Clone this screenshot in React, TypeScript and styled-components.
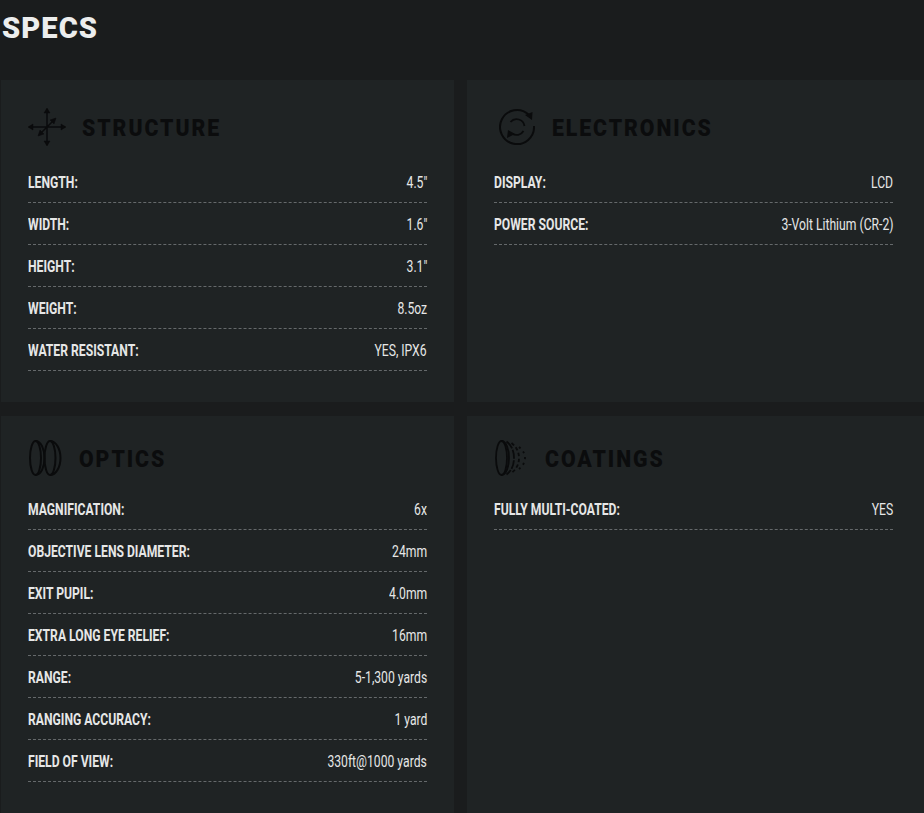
import React from "react";
import styled, { createGlobalStyle } from "styled-components";

const GlobalStyle = createGlobalStyle`
  html, body {
    margin: 0;
    padding: 0;
    background-color: #1a1c1d;
  }
  body {
    font-family: "Roboto", "Liberation Sans", sans-serif;
    overflow: hidden;
  }
`;

const Page = styled.div`
  height: 813px;
  overflow: hidden;
  padding: 0 0 0 1px;
  box-sizing: border-box;
`;

const Title = styled.h1`
  margin: 0;
  height: 80px;
  padding: 10px 0 0 1px;
  box-sizing: border-box;
  font-size: 30px;
  line-height: 36px;
  font-weight: 900;
  letter-spacing: 1.1px;
  color: #eceded;
  transform: scaleX(0.97);
  transform-origin: left center;
`;

const Grid = styled.div`
  display: grid;
  grid-template-columns: 453px 457px;
  grid-template-rows: 322px 420px;
  column-gap: 13px;
  row-gap: 14px;
`;

const Card = styled.section`
  background-color: #1f2324;
  padding: 0 27px;
`;

const CardHeader = styled.div<{ $compact?: boolean; $indent: number; $gap: number }>`
  display: flex;
  align-items: center;
  gap: ${(props) => props.$gap}px;
  padding: ${(props) => (props.$compact ? "23px 0 12px" : "28px 0 16px")};
  padding-left: ${(props) => props.$indent}px;
`;

const CardTitle = styled.h2`
  margin: 2px 0 0 0;
  font-size: 24px;
  line-height: 36px;
  font-weight: 900;
  letter-spacing: 2.2px;
  color: #0b0c0d;
  transform: scaleX(0.885);
  transform-origin: left center;
`;

const SpecList = styled.ul`
  list-style: none;
  margin: 0;
  padding: 0;
  width: 399px;
`;

const SpecRow = styled.li`
  height: 41px;
  margin-bottom: 1px;
  box-sizing: border-box;
  border-bottom: 1px dashed #65696b;
  display: flex;
  justify-content: space-between;
  align-items: center;
  padding-top: 1px;
  font-size: 16px;
  color: #e6e7e7;
`;

const SpecLabel = styled.span`
  font-weight: 700;
  transform: scaleX(0.76);
  transform-origin: left center;
  white-space: nowrap;
`;

const SpecValue = styled.span`
  font-weight: 400;
  transform: scaleX(0.76);
  transform-origin: right center;
  white-space: nowrap;
`;

const Icon = styled.svg`
  display: block;
  flex: none;
  fill: none;
  stroke: #0a0b0c;
`;

const StructureIcon = () => (
  <Icon width="38" height="38" viewBox="0 0 38 38" strokeWidth="1.5">
    <path d="M1 19H37M19 1V37M11 27L27 11" />
    <path d="M0 19l5-3v6zM38 19l-5-3v6zM19 0l-3 5h6zM19 38l-3-5h6zM28 10l-6 2 4 4zM10 28l6-2-4-4z" fill="#0a0b0c" strokeWidth="0.5" />
  </Icon>
);

const ElectronicsIcon = () => (
  <Icon width="36" height="38" viewBox="0 -1 36 38" strokeWidth="2">
    <path d="M29.5 5.500A17 17 0 1 0 35 17" />
    <path d="M11.500 13A8 8 0 0 1 25.500 17M24.500 22A8 8 0 0 1 13 24.500" strokeWidth="1.800" />
    <path d="M33.500 3L33 11L26 6zM8 29L9 21L16 25z" fill="#0a0b0c" stroke="none" />
  </Icon>
);

const OpticsIcon = () => (
  <Icon width="34" height="38" viewBox="0 0 34 38" strokeWidth="2">
    <ellipse cx="7.500" cy="19" rx="5.500" ry="17" />
    <path d="M7.500 2C13 2 16.500 10 16.500 19S13 36 7.500 36" />
    <ellipse cx="22" cy="19" rx="5.500" ry="17" />
    <path d="M22 2C28 2 32.500 10 32.500 19S28 36 22 36" />
  </Icon>
);

const CoatingsIcon = () => (
  <Icon width="34" height="38" viewBox="0 0 34 38" strokeWidth="1.800">
    <ellipse cx="7.500" cy="19" rx="5.500" ry="17" />
    <path d="M7.500 2C12 2 15 10 15 19S12 36 7.500 36" />
    <path d="M12.500 2.500C17.500 6 20 12 20 19S17.500 32 12.500 35.500" strokeDasharray="9 1.500" />
    <path d="M17.500 4C22.500 8 25 13 25 19S22.500 30 17.500 34" strokeDasharray="3.500 2.500" />
    <path d="M25 8C29.500 12 31 15 31 19S29.500 26 25 30" strokeDasharray="2 4" />
  </Icon>
);

type Spec = [string, string];

const structure: Spec[] = [
  ["LENGTH:", "4.5\""],
  ["WIDTH:", "1.6\""],
  ["HEIGHT:", "3.1\""],
  ["WEIGHT:", "8.5oz"],
  ["WATER RESISTANT:", "YES, IPX6"],
];

const electronics: Spec[] = [
  ["DISPLAY:", "LCD"],
  ["POWER SOURCE:", "3-Volt Lithium (CR-2)"],
];

const optics: Spec[] = [
  ["MAGNIFICATION:", "6x"],
  ["OBJECTIVE LENS DIAMETER:", "24mm"],
  ["EXIT PUPIL:", "4.0mm"],
  ["EXTRA LONG EYE RELIEF:", "16mm"],
  ["RANGE:", "5-1,300 yards"],
  ["RANGING ACCURACY:", "1 yard"],
  ["FIELD OF VIEW:", "330ft@1000 yards"],
];

const coatings: Spec[] = [["FULLY MULTI-COATED:", "YES"]];

interface SpecCardProps {
  title: string;
  icon: React.ReactNode;
  compact?: boolean;
  indent?: number;
  gap: number;
  specs: Spec[];
}

const SpecCard: React.FC<SpecCardProps> = (props) => (
  <Card>
    <CardHeader $compact={props.compact} $indent={props.indent ?? 0} $gap={props.gap}>
      {props.icon}
      <CardTitle>{props.title}</CardTitle>
    </CardHeader>
    <SpecList>
      {props.specs.map(([label, value]) => (
        <SpecRow key={label}>
          <SpecLabel>{label}</SpecLabel>
          <SpecValue>{value}</SpecValue>
        </SpecRow>
      ))}
    </SpecList>
  </Card>
);

export default function App() {
  return (
    <Page>
      <GlobalStyle />
      <Title>SPECS</Title>
      <Grid>
        <SpecCard title="STRUCTURE" icon={<StructureIcon />} gap={16} specs={structure} />
        <SpecCard title="ELECTRONICS" icon={<ElectronicsIcon />} indent={5} gap={17} specs={electronics} />
        <SpecCard title="OPTICS" icon={<OpticsIcon />} compact gap={17} specs={optics} />
        <SpecCard title="COATINGS" icon={<CoatingsIcon />} compact gap={17} specs={coatings} />
      </Grid>
    </Page>
  );
}
